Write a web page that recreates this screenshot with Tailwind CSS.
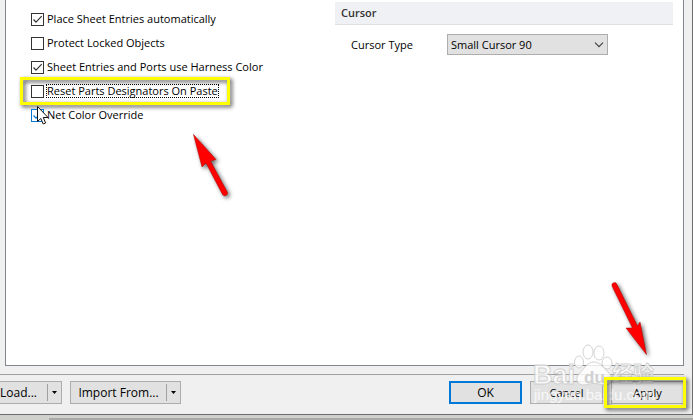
<!DOCTYPE html>
<html lang="en">
<head>
    <meta charset="UTF-8">
    <meta name="viewport" content="width=device-width, initial-scale=1.0">
    <title>Preferences</title>
    <script src="https://cdn.jsdelivr.net/npm/@tailwindcss/browser@4"></script>
</head>
<body class="relative flex h-screen flex-col overflow-hidden bg-[#d0d0cc] font-['Open_Sans','Noto_Sans',sans-serif] text-[11px] leading-4 text-black">
    <!-- Dialog -->
    <div class="flex flex-1 flex-col border-r border-b border-[#6d6d6d] bg-[#f0f0f0]">
        <!-- Settings page -->
        <main class="mr-2 ml-[5px] grid flex-1 grid-cols-[329px_1fr] border-x border-b border-[#828790] bg-white">
            <div class="flex flex-col pt-[7px] pl-[25px]">
                <label class="flex h-6 items-center gap-[2px]">
                    <span class="relative flex size-[13px]">
                        <input type="checkbox" checked class="size-[13px] appearance-none border border-[#333] bg-white">
                        <svg class="pointer-events-none absolute inset-0" viewBox="0 0 13 13" fill="none" stroke="#333" stroke-width="1.2"><path d="M2.5 6.5 5 9.2 10.7 3.2"/></svg>
                    </span>
                    <span class="px-px">Place Sheet Entries automatically</span>
                </label>
                <label class="flex h-6 items-center gap-[2px]">
                    <input type="checkbox" class="size-[13px] appearance-none border border-[#333] bg-white">
                    <span class="px-px">Protect Locked Objects</span>
                </label>
                <label class="flex h-6 items-center gap-[2px]">
                    <span class="relative flex size-[13px]">
                        <input type="checkbox" checked class="size-[13px] appearance-none border border-[#333] bg-white">
                        <svg class="pointer-events-none absolute inset-0" viewBox="0 0 13 13" fill="none" stroke="#333" stroke-width="1.2"><path d="M2.5 6.5 5 9.2 10.7 3.2"/></svg>
                    </span>
                    <span class="px-px">Sheet Entries and Ports use Harness Color</span>
                </label>
                <label class="relative flex h-6 items-center gap-[2px] self-start">
                    <input type="checkbox" class="size-[13px] appearance-none border border-[#333] bg-white">
                    <span class="border border-dotted border-black leading-3">Reset Parts Designators On Paste</span>
                    <!-- Highlight frame -->
                    <svg class="pointer-events-none absolute -top-1 -left-[13px] h-10 w-[222px] overflow-visible" viewBox="0 0 222 40" fill="none">
                        <g class="drop-shadow-[2px_2px_2px_rgba(0,0,0,0.7)]"><rect x="3.5" y="3.5" width="207" height="25" stroke="#ff0" stroke-width="3"/></g>
                    </svg>
                </label>
                <label class="relative flex h-6 items-center gap-[2px]">
                    <span class="relative flex size-[13px]">
                        <input type="checkbox" checked class="size-[13px] appearance-none border border-[#0078d7] bg-white">
                        <svg class="pointer-events-none absolute inset-0" viewBox="0 0 13 13" fill="none" stroke="#0078d7" stroke-width="1.2"><path d="M2.5 6.5 5 9.2 10.7 3.2"/></svg>
                    </span>
                    <span class="px-px">Net Color Override</span>
                    <!-- Mouse pointer -->
                    <svg class="pointer-events-none absolute top-0 left-[6px] h-5 w-3 overflow-visible" viewBox="0 0 12 20"><path d="M.5 3.5V18.5L3.8 15.5 6.2 21 8.6 20 6.3 14.5H11Z" fill="#fff" stroke="#111"/></svg>
                </label>
            </div>

            <section class="pt-[2px] pr-[10px]">
                <h2 class="border-b border-[#dfe0e3] bg-[#f0f1f5] px-[6px] py-[3px] font-semibold text-[#333]">Cursor</h2>
                <div class="mt-[9px] flex items-center pl-4">
                    <label for="cursorType" class="w-24">Cursor Type</label>
                    <span class="relative">
                        <select id="cursorType" class="block h-[21px] w-[161px] appearance-none border border-[#adadad] bg-[#e1e1e1] pl-[3px]">
                            <option>Small Cursor 90</option>
                        </select>
                        <svg class="pointer-events-none absolute top-2 right-[4px] h-[6px] w-[10px]" viewBox="0 0 10 6" fill="none" stroke="#444" stroke-width="1.2"><path d="M1 .7 5 4.7 9 .7"/></svg>
                    </span>
                </div>
            </section>
        </main>

        <!-- Button bar -->
        <footer class="mt-2 mr-2 flex justify-between border-t border-[#a0a0a0] pb-[10px]">
            <div class="flex gap-2 pt-[6px]">
                <div class="flex h-[23px] w-[62px] items-center border border-l-0 border-[#adadad] bg-[#e1e1e1]">
                    <button type="button" class="flex-1 text-left text-[12px]">Load...</button>
                    <button type="button" aria-label="Load options" class="flex h-[17px] w-[14px] items-center justify-center border-l border-[#a0a0a0]">
                        <svg class="h-[3px] w-[5px]" viewBox="0 0 5 3"><path d="M0 0H5L2.5 3Z"/></svg>
                    </button>
                </div>
                <div class="flex h-[23px] w-[111px] items-center border border-[#adadad] bg-[#e1e1e1]">
                    <button type="button" class="flex-1 text-[12px]">Import From...</button>
                    <button type="button" aria-label="Import options" class="flex h-[17px] w-[14px] items-center justify-center border-l border-[#a0a0a0]">
                        <svg class="h-[3px] w-[5px]" viewBox="0 0 5 3"><path d="M0 0H5L2.5 3Z"/></svg>
                    </button>
                </div>
            </div>
            <div class="flex gap-2 pt-[6px]">
                <button type="button" class="h-[23px] w-[73px] border-2 border-[#0078d7] bg-[#e1e1e1] text-[12px]">OK</button>
                <button type="button" class="h-[23px] w-[73px] border border-[#adadad] bg-[#e1e1e1] text-[11px]">Cancel</button>
                <div class="relative">
                    <button type="button" class="h-[23px] w-[73px] border border-[#adadad] bg-[#e1e1e1] text-[11px]">Apply</button>
                    <svg class="pointer-events-none absolute -top-[5px] -left-[7px] z-10 h-9 w-[86px] overflow-visible" viewBox="0 0 86 36" fill="none">
                        <g class="drop-shadow-[2px_2px_2px_rgba(0,0,0,0.7)]"><rect x="1.5" y="2.5" width="79" height="28" stroke="#ff0" stroke-width="3"/></g>
                    </svg>
                </div>
            </div>
        </footer>
    </div>
    <!-- Sheet behind the dialog -->
    <div class="h-[5px] pt-[3px] pl-[49px]"><div class="h-[2px] bg-[#a9a9a9]"></div></div>

    <!-- Watermark -->
    <div class="pointer-events-none absolute right-[18px] bottom-[14px] w-[142px]">
        <svg class="block h-[63px] w-[142px] overflow-visible" viewBox="0 0 142 63" font-weight="bold">
            <g fill="#fff" fill-opacity=".8" stroke="#c8c8c8" stroke-opacity=".8" stroke-width="1">
                <ellipse cx="46" cy="19" rx="4.5" ry="6"/>
                <ellipse cx="55" cy="9" rx="5" ry="7"/>
                <ellipse cx="66" cy="10" rx="5" ry="7"/>
                <ellipse cx="74" cy="20" rx="5" ry="6"/>
                <path d="M61 19C54 19 51 26 47 30C41 35 44 43 52 42C58 40 64 40 70 42C79 43 81 35 76 30C71 26 68 19 61 19Z"/>
                <text x="0" y="41" font-size="27" font-family="Liberation Sans, sans-serif">Bai</text>
                <text x="79" y="38" font-size="21" font-family="Noto Sans CJK SC, sans-serif">经验</text>
            </g>
            <text x="51" y="40" font-size="17" fill="#d0d0d0" font-family="Liberation Sans, sans-serif">du</text>
            <text x="1" y="57" font-size="15" font-weight="normal" fill="#fff" fill-opacity=".7" stroke="#fff" stroke-opacity=".3" stroke-width=".5" font-family="Liberation Sans, sans-serif">jingyan.baidu.com</text>
        </svg>
    </div>

    <!-- Annotation arrows -->
    <svg class="pointer-events-none absolute top-[130px] left-[190px] h-[70px] w-[44px] overflow-visible" viewBox="0 0 44 70">
        <g class="drop-shadow-[2px_2px_2px_rgba(0,0,0,0.6)]"><path d="M3.500 4.500 26 29.500 20.500 31 37 61.500A2.600 2.600 0 0 1 32.500 64.500L16 33 12 37Z" fill="#f00" stroke="#a00" stroke-width=".5"/></g>
    </svg>
    <svg class="pointer-events-none absolute top-[280px] left-[608px] h-[80px] w-[44px] overflow-visible" viewBox="0 0 44 80">
        <g class="drop-shadow-[2px_2px_2px_rgba(0,0,0,0.6)]"><path d="M4 6A2.600 2.600 0 0 1 9 4.500L29.500 46 32 42 38.500 74.500 18 48 24.500 48Z" fill="#f00" stroke="#a00" stroke-width=".5"/></g>
    </svg>
</body>
</html>
